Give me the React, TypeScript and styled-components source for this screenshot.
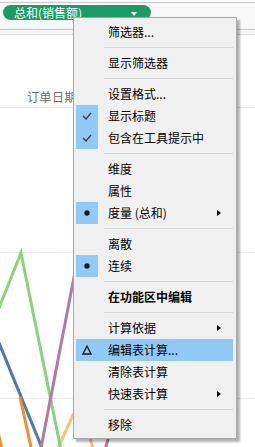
import React from "react";
import styled, { createGlobalStyle } from "styled-components";

const Global = createGlobalStyle`
  html, body { margin: 0; padding: 0; background: #ffffff; }
  body {
    width: 255px; height: 447px; overflow: hidden;
    font-family: "Noto Sans CJK SC", "Noto Sans", sans-serif;
  }
`;

const Page = styled.div`
  position: relative;
  width: 255px;
  height: 447px;
  overflow: hidden;
  background: #ffffff;
`;

const Shelf = styled.div`
  margin-top: 2px;
  height: 24px;
  padding: 2px 0 0 3px;
  border-top: 1px solid #c9c9c9;
  border-bottom: 1px solid #c6c6c6;
  background: #f8f8f8;
`;

const Pill = styled.div`
  display: flex;
  align-items: center;
  justify-content: space-between;
  width: 148px;
  height: 15px;
  box-sizing: border-box;
  padding: 0 14px 0 11px;
  border-radius: 8px;
  background: #1c9b68;
  color: #ffffff;
  font-size: 12px;
  line-height: 15px;
`;

const PillArrow = styled.span`
  width: 0;
  height: 0;
  border-left: 3.5px solid transparent;
  border-right: 3.5px solid transparent;
  border-top: 4px solid #ffffff;
  margin-top: 2px;
`;

const Strip = styled.div`
  height: 4px;
  background: #f6f6f6;
  border-bottom: 1px solid #d6d6d6;
`;

const Header = styled.div`
  height: 71px;
  padding: 0 0 1px 27px;
  display: flex;
  align-items: flex-end;
  border-bottom: 1px solid #e8e8e8;
`;

const AxisTitle = styled.span`
  font-size: 12px;
  line-height: 16px;
  color: #6b6b6b;
  font-family: "Liberation Serif", "Noto Sans CJK SC", serif;
  letter-spacing: 0.5px;
`;

const Chart = styled.svg`
  display: block;
  width: 255px;
  height: 339px;
`;

const Menu = styled.div`
  position: absolute;
  left: 73px;
  top: 17px;
  width: 164px;
  box-sizing: border-box;
  padding: 3px 3px 2px 2px;
  background: #f0f0f0;
  border: 1px solid #a8a8a8;
  box-shadow: 3px 3px 2px rgba(0, 0, 0, 0.3);
  font-size: 12px;
  color: #000000;
`;

const Item = styled.div<{ $active?: boolean; $bold?: boolean }>`
  display: grid;
  grid-template-columns: 22px 1fr 5px;
  column-gap: 10px;
  align-items: center;
  height: 22px;
  padding-right: 11px;
  background: ${(p) => (p.$active ? "#91c9f7" : "transparent")};
  font-weight: ${(p) => (p.$bold ? 700 : 400)};
  line-height: 22px;
  white-space: nowrap;
`;

const IconCell = styled.div<{ $on?: boolean }>`
  width: 22px;
  height: 22px;
  display: flex;
  align-items: center;
  justify-content: center;
  background: ${(p) => (p.$on ? "#91c9f7" : "transparent")};
`;

const Label = styled.span``;

const SubArrow = styled.span`
  width: 0;
  height: 0;
  border-top: 3.5px solid transparent;
  border-bottom: 3.5px solid transparent;
  border-left: 4px solid #000000;
`;

const Separator = styled.div`
  height: 1px;
  margin: 4px 0 4px 28px;
  background: #d4d4d4;
`;

type Icon = "check" | "dot" | "delta" | undefined;

const Glyph = ({ icon }: { icon: Icon }) => {
  if (icon === "check")
    return (
      <svg width="10" height="8" viewBox="0 0 10 8">
        <polyline points="1,4 4,7 9,1" fill="none" stroke="#3c3c3c" strokeWidth="1.3" />
      </svg>
    );
  if (icon === "dot")
    return (
      <svg width="6" height="6" viewBox="0 0 6 6">
        <circle cx="3" cy="3" r="2.7" fill="#1a1a1a" />
      </svg>
    );
  if (icon === "delta")
    return (
      <svg width="10" height="10" viewBox="0 0 10 10">
        <polygon points="5,1 9,9 1,9" fill="none" stroke="#1a1a1a" strokeWidth="1.3" />
      </svg>
    );
  return null;
};

type Entry =
  | { sep: true }
  | { sep?: false; label: string; icon?: Icon; sub?: boolean; active?: boolean; bold?: boolean };

const entries: Entry[] = [
  { label: "筛选器..." },
  { sep: true },
  { label: "显示筛选器" },
  { sep: true },
  { label: "设置格式..." },
  { label: "显示标题", icon: "check" },
  { label: "包含在工具提示中", icon: "check" },
  { sep: true },
  { label: "维度" },
  { label: "属性" },
  { label: "度量 (总和)", icon: "dot", sub: true },
  { sep: true },
  { label: "离散" },
  { label: "连续", icon: "dot" },
  { sep: true },
  { label: "在功能区中编辑", bold: true },
  { sep: true },
  { label: "计算依据", sub: true },
  { label: "编辑表计算...", icon: "delta", active: true },
  { label: "清除表计算" },
  { label: "快速表计算", sub: true },
  { sep: true },
  { label: "移除" },
];

export default function App() {
  return (
    <Page>
      <Global />
      <Shelf>
        <Pill>
          <span>总和(销售额)</span>
          <PillArrow />
        </Pill>
      </Shelf>
      <Strip />
      <Header>
        <AxisTitle>订单日期</AxisTitle>
      </Header>
      <Chart viewBox="0 108 255 339">
        <line x1="0" y1="252.5" x2="255" y2="252.5" stroke="#ebebeb" strokeWidth="1" />
        <line x1="0" y1="398.5" x2="255" y2="398.5" stroke="#ebebeb" strokeWidth="1" />
        <g fill="none" strokeWidth="3" strokeLinejoin="miter">
          <polyline points="-5,333 42,448" stroke="#4e79a7" />
          <polyline points="20,397 31,447" stroke="#f28e2b" />
          <polyline points="-2,432 2,449" stroke="#f28e2b" />
          <polyline points="58,448 73,415 82,404 93,450" stroke="#ffbe7d" />
          <polyline points="-5,318 21,253 61,450" stroke="#8cd17d" />
          <polyline points="41,448 80,246" stroke="#b07aa1" />
          <polyline points="112,425 105,450" stroke="#b07aa1" />
        </g>
      </Chart>
      <Menu>
        {entries.map((e, i) =>
          e.sep ? (
            <Separator key={i} />
          ) : (
            <Item key={i} $active={e.active} $bold={e.bold}>
              <IconCell $on={!!e.icon && !e.active}>
                <Glyph icon={e.icon} />
              </IconCell>
              <Label>{e.label}</Label>
              {e.sub ? <SubArrow /> : <span />}
            </Item>
          )
        )}
      </Menu>
    </Page>
  );
}
